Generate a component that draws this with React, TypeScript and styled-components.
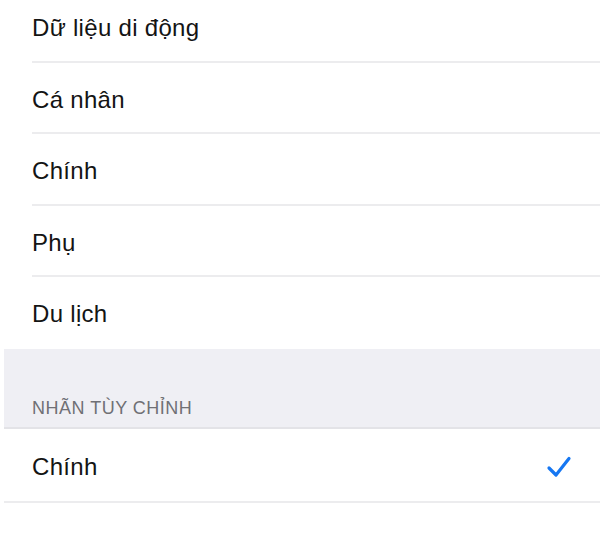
import React from "react";
import styled, { createGlobalStyle } from "styled-components";

const GlobalStyle = createGlobalStyle`
  html, body {
    margin: 0;
    padding: 0;
    background: #ffffff;
  }
  body {
    font-family: "Liberation Sans", "Noto Sans", Arial, sans-serif;
    overflow: hidden;
  }
`;

const Page = styled.div`
  width: 600px;
  height: 542px;
  padding-left: 4px;
  box-sizing: border-box;
  margin-top: -9px;
`;

const List = styled.div`
  display: flex;
  flex-direction: column;
  background: #ffffff;
`;

const Row = styled.div<{ $last?: boolean; $full?: boolean; $tall?: boolean }>`
  height: ${(p) => (p.$tall ? "74px" : "71.5px")};
  box-sizing: border-box;
  display: flex;
  align-items: center;
  justify-content: space-between;
  padding: 3px 28px 0 28px;
  position: relative;
  font-size: 24px;
  letter-spacing: 0.3px;
  color: #141414;
  &::after {
    content: "";
    position: absolute;
    left: ${(p) => (p.$full ? "0" : "28px")};
    right: 0;
    bottom: 0;
    height: 2px;
    background: #ececee;
    display: ${(p) => (p.$last ? "none" : "block")};
  }
`;

const Section = styled.div`
  height: 80px;
  background: #efeff4;
  display: flex;
  align-items: flex-end;
  padding: 0 0 8px 28px;
  box-sizing: border-box;
  border-bottom: 2px solid #e3e3e7;
`;

const SectionTitle = styled.span`
  font-size: 18px;
  color: #707075;
  letter-spacing: 0.5px;
`;

const Check = () => (
  <svg width="26" height="26" viewBox="0 0 26 26">
    <path
      d="M3 14 L10 21 L23 4.5"
      fill="none"
      stroke="#1677f2"
      strokeWidth="3.2"
      strokeLinecap="round"
      strokeLinejoin="round"
    />
  </svg>
);

const items = ["Dữ liệu di động", "Cá nhân", "Chính", "Phụ", "Du lịch"];

export default function App() {
  return (
    <Page>
      <GlobalStyle />
      <List>
        {items.map((t, i) => (
          <Row key={t} $last={i === items.length - 1}>
            <span>{t}</span>
          </Row>
        ))}
      </List>
      <Section>
        <SectionTitle>NHÃN TÙY CHỈNH</SectionTitle>
      </Section>
      <List>
        <Row $full $tall>
          <span>Chính</span>
          <Check />
        </Row>
      </List>
    </Page>
  );
}
